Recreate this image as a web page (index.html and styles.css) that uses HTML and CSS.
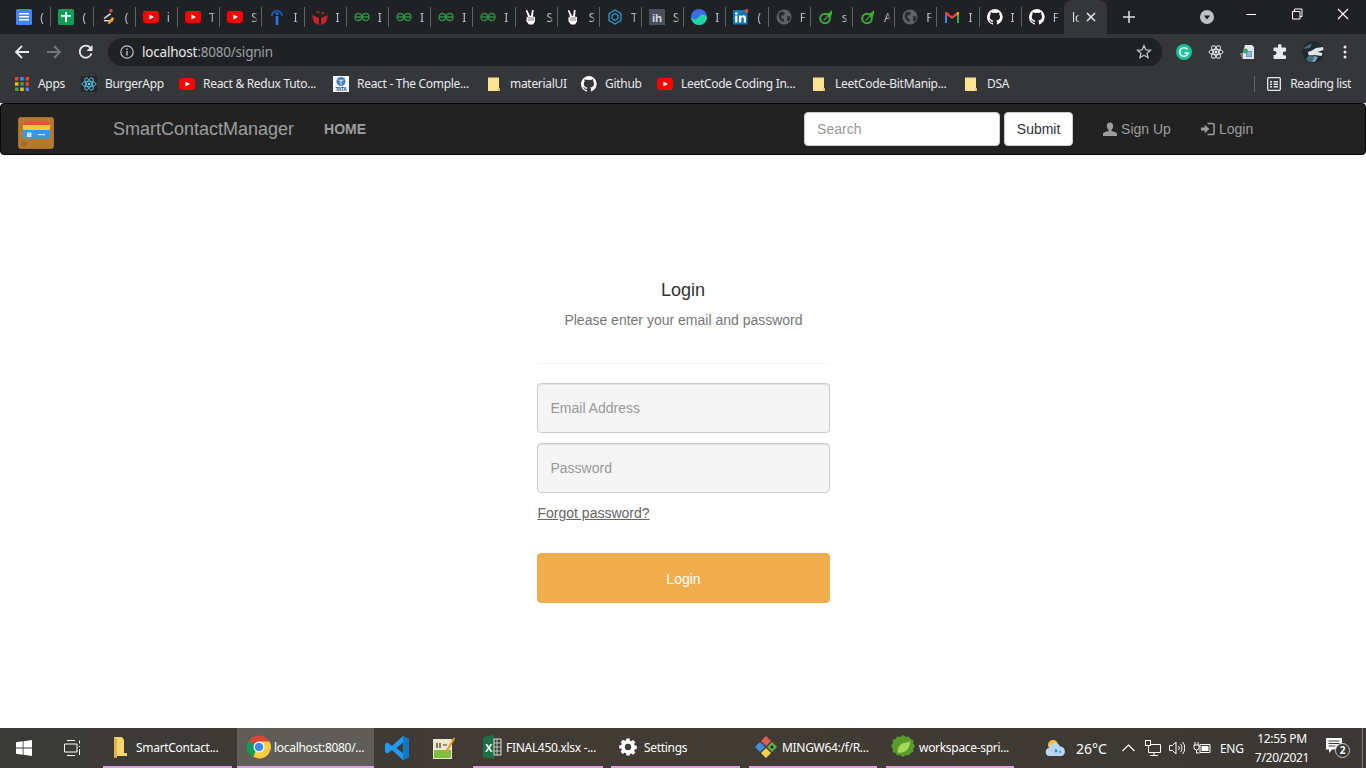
FILE: index.html
```html
<!DOCTYPE html>
<html lang="en">
<head>
<meta charset="utf-8">
<title>Login</title>
<link rel="stylesheet" href="styles.css">
</head>
<body>
<svg class="defs" aria-hidden="true">
  <symbol id="docs" viewBox="0 0 16 16"><rect width="16" height="16" rx="1.5" fill="#4285f4"/><path d="M3 4h10v1.600H3zM3 7h10v1.600H3zM3 10h10v1.600H3z" fill="#fff"/></symbol>
  <symbol id="sheets" viewBox="0 0 16 16"><rect width="16" height="16" rx="1.5" fill="#0f9d58"/><path d="M3 6h10v1.800H3zM7 3h2v10H7z" fill="#fff"/></symbol>
  <symbol id="pen" viewBox="0 0 16 16"><circle cx="10" cy="1.800" r="1.700" fill="#e2533b"/><path d="M9 4 2.500 9l1 1L10 5.500z" fill="#d9d9d9"/><path d="M3 11h9v1.400H3z" fill="#ddd"/><path d="M11 8l2.500 1.500-5 5.500-2-.6z" fill="#f2a428"/></symbol>
  <symbol id="yt" viewBox="0 0 16 16"><rect y="2" width="16" height="12" rx="3" fill="#f00"/><path d="M6.400 5.400 11 8l-4.600 2.600z" fill="#fff"/></symbol>
  <symbol id="info-i" viewBox="0 0 16 16"><path d="M2 7a6 6 0 0 1 12 0h-1.600a4.400 4.400 0 0 0-8.800 0z" fill="#1a5fd0"/><circle cx="8" cy="4.600" r="1.700" fill="#1a5fd0"/><rect x="6.700" y="7" width="2.600" height="9" rx=".5" fill="#2b78ea"/></symbol>
  <symbol id="redbox" viewBox="0 0 16 16"><path d="M8 0l8 3v5l-8 3-8-3V3z" fill="#222"/><path d="M0 6l7 3v7l-5-2.500zM16 6l-7 3v7l5-2.500z" fill="#c9242c"/><path d="M4 3l2-1 2 1-2 1zM9 4l2-1 2 1-2 1z" fill="#c9242c"/></symbol>
  <symbol id="gfg" viewBox="0 0 16 16"><path d="M.5 8h15M8 8c-.6-2.600-2.200-3.500-3.800-3.500S1 5.800 1 8s1.500 3.500 3.200 3.500S7.400 10.600 8 8c.6 2.600 2.200 3.500 3.800 3.500S15 10.200 15 8s-1.500-3.500-3.200-3.500S8.600 5.400 8 8z" fill="none" stroke="#2f8d46" stroke-width="1.300"/></symbol>
  <symbol id="peace" viewBox="0 0 16 16"><path d="M4.200 1 7 7l1-.2L9 1h1.600L10 7.500l2 .5v4.500L10 15.500H6L3.500 12.500V8.500L5 7.500 2.800 1.600z" fill="#fff"/><path d="M5 9h6M5 11h6" stroke="#555" stroke-width=".8"/></symbol>
  <symbol id="hex" viewBox="0 0 16 16"><path d="M8 1l6 3.500v7L8 15l-6-3.500v-7z" fill="none" stroke="#2a9fd8" stroke-width="1.300"/><path d="M8 4.500l3 1.800v3.400l-3 1.800-3-1.800V6.300z" fill="none" stroke="#2a9fd8" stroke-width="1.200"/></symbol>
  <symbol id="ih" viewBox="0 0 16 16"><rect width="16" height="16" fill="#4a4f5e"/><text x="8" y="12.500" font-family="Liberation Sans" font-size="11.500" font-weight="700" fill="#d6d8dc" text-anchor="middle">ih</text></symbol>
  <symbol id="wave" viewBox="0 0 16 16"><circle cx="8" cy="8" r="8" fill="#3f6bea"/><path d="M0 8c2 3 4 3 6 1.500S10 5 12 5.500 15 7 16 8a8 8 0 0 1-16 0z" fill="#1fd6a3"/></symbol>
  <symbol id="li" viewBox="0 0 16 16"><rect y="1" width="14.500" height="14.500" rx="1" fill="#0a78b5"/><path d="M2.200 6.500h2.200v7H2.200zM2.100 3.600h2.400v2H2.100zM6 6.500h2.100v1c.5-.8 1.300-1.200 2.300-1.200 1.900 0 2.600 1.200 2.600 3.100v4.100h-2.200V9.800c0-.9-.3-1.500-1.100-1.500-.9 0-1.400.6-1.400 1.600v3.600H6z" fill="#fff"/><circle cx="13.500" cy="2" r="2" fill="#e8453c"/></symbol>
  <symbol id="globe" viewBox="0 0 16 16"><circle cx="8" cy="8" r="7.500" fill="#5f6368"/><path d="M3 4l3-1.500 3 1-1 2.500-3 1 1 2.500 2 .5-.5 3L5 12 2.500 8zM11 7.500l3-.5.5 3-2.500 3-1-2z" fill="#2c2d30"/></symbol>
  <symbol id="leaf" viewBox="0 0 16 16"><circle cx="7" cy="9.500" r="4.800" fill="none" stroke="#3fa93a" stroke-width="2"/><path d="M6 5.200C9 4.500 12 4 14 1c.4 3-.4 6-2.200 8.500L10 6.500z" fill="#3fa93a"/><path d="M5.500 11.500 10 6.800" stroke="#3fa93a" stroke-width="1.200"/></symbol>
  <symbol id="gmail" viewBox="0 0 16 16"><path d="M1 3.500 3 3v11H1z" fill="#4285f4"/><path d="M13 3l2 .5V14h-2z" fill="#34a853"/><path d="M1 3.500 3 3l5 4.200L13 3l2 .5V5L8 10 1 5z" fill="#ea4335"/><path d="M13 3l2 .5V5l-2 1.500z" fill="#fbbc04"/></symbol>
  <symbol id="github" viewBox="0 0 16 16"><path fill="#fff" d="M8 0a8 8 0 0 0-2.500 15.600c.4.100.5-.2.500-.4v-1.400c-2.200.5-2.700-1-2.700-1-.4-.9-.9-1.200-.9-1.200-.7-.5.100-.5.100-.5.800.1 1.200.8 1.200.8.700 1.200 1.900.9 2.300.7.100-.5.300-.9.500-1.100-1.800-.2-3.700-.9-3.700-4 0-.9.300-1.600.8-2.100-.1-.2-.4-1 .1-2.100 0 0 .7-.2 2.200.8a7.600 7.600 0 0 1 4 0c1.500-1 2.200-.8 2.200-.8.400 1.100.2 1.900.1 2.100.5.600.8 1.300.8 2.100 0 3.100-1.900 3.700-3.700 3.900.3.300.6.800.6 1.500v2.200c0 .2.100.5.500.4A8 8 0 0 0 8 0z"/></symbol>
  <symbol id="folder" viewBox="0 0 16 16"><path d="M2 1.500h11v11l1 .4V15H2z" fill="#fde293"/><path d="M12.500 12h1.500v3h-2z" fill="#e3b94e"/></symbol>
  <symbol id="react" viewBox="0 0 16 16"><rect width="16" height="16" fill="#23272b" rx="1"/><g fill="none" stroke="#61dafb" stroke-width=".8"><ellipse cx="8" cy="8" rx="7" ry="2.700"/><ellipse cx="8" cy="8" rx="7" ry="2.700" transform="rotate(60 8 8)"/><ellipse cx="8" cy="8" rx="7" ry="2.700" transform="rotate(120 8 8)"/></g><circle cx="8" cy="8" r="1.300" fill="#61dafb"/></symbol>
  <symbol id="tata" viewBox="0 0 16 16"><rect width="16" height="16" fill="#f4f6f8"/><circle cx="8" cy="5.500" r="4.500" fill="#3f7cc0"/><path d="M5 3.500c1.500 2 4.500 2 6 0M8 3v6" stroke="#fff" stroke-width=".8" fill="none"/><text x="8" y="15.300" font-family="Liberation Sans" font-size="5" font-weight="700" fill="#1a4f8f" text-anchor="middle">TATA</text></symbol>
</svg>

<header class="tabstrip">
  <div class="tab"><svg class="fav"><use href="#docs"/></svg><span class="tab-t">(</span></div>
  <div class="tab"><svg class="fav"><use href="#sheets"/></svg><span class="tab-t">(</span></div>
  <div class="tab"><svg class="fav"><use href="#pen"/></svg><span class="tab-t">(</span></div>
  <div class="tab"><svg class="fav"><use href="#yt"/></svg><span class="tab-t">i</span></div>
  <div class="tab"><svg class="fav"><use href="#yt"/></svg><span class="tab-t">T</span></div>
  <div class="tab"><svg class="fav"><use href="#yt"/></svg><span class="tab-t">S</span></div>
  <div class="tab"><svg class="fav"><use href="#info-i"/></svg><span class="tab-t">I</span></div>
  <div class="tab"><svg class="fav"><use href="#redbox"/></svg><span class="tab-t">I</span></div>
  <div class="tab"><svg class="fav"><use href="#gfg"/></svg><span class="tab-t">I</span></div>
  <div class="tab"><svg class="fav"><use href="#gfg"/></svg><span class="tab-t">I</span></div>
  <div class="tab"><svg class="fav"><use href="#gfg"/></svg><span class="tab-t">I</span></div>
  <div class="tab"><svg class="fav"><use href="#gfg"/></svg><span class="tab-t">I</span></div>
  <div class="tab"><svg class="fav"><use href="#peace"/></svg><span class="tab-t">S</span></div>
  <div class="tab"><svg class="fav"><use href="#peace"/></svg><span class="tab-t">S</span></div>
  <div class="tab"><svg class="fav"><use href="#hex"/></svg><span class="tab-t">T</span></div>
  <div class="tab"><svg class="fav"><use href="#ih"/></svg><span class="tab-t">S</span></div>
  <div class="tab"><svg class="fav"><use href="#wave"/></svg><span class="tab-t">I</span></div>
  <div class="tab"><svg class="fav"><use href="#li"/></svg><span class="tab-t">(</span></div>
  <div class="tab"><svg class="fav"><use href="#globe"/></svg><span class="tab-t">F</span></div>
  <div class="tab"><svg class="fav"><use href="#leaf"/></svg><span class="tab-t">s</span></div>
  <div class="tab"><svg class="fav"><use href="#leaf"/></svg><span class="tab-t">A</span></div>
  <div class="tab"><svg class="fav"><use href="#globe"/></svg><span class="tab-t">F</span></div>
  <div class="tab"><svg class="fav"><use href="#gmail"/></svg><span class="tab-t">I</span></div>
  <div class="tab"><svg class="fav"><use href="#github"/></svg><span class="tab-t">I</span></div>
  <div class="tab tab-last"><svg class="fav"><use href="#github"/></svg><span class="tab-t">F</span></div>
  <div class="tab-active"><span class="tab-active-t">lo</span>
    <svg class="tab-x" viewBox="0 0 10 10"><path d="M1 1l8 8M9 1L1 9" stroke="#e8eaed" stroke-width="1.500"/></svg>
  </div>
  <svg class="newtab" viewBox="0 0 12 12"><path d="M6 0v12M0 6h12" stroke="#dfe1e5" stroke-width="1.500"/></svg>
  <svg class="profile-drop" viewBox="0 0 14 14"><circle cx="7" cy="7" r="7" fill="#bdc1c6"/><path d="M3.800 5.500h6.400L7 9.500z" fill="#202124"/></svg>
  <div class="winctl">
    <svg class="win-btn" viewBox="0 0 46 28"><path d="M18 14.500h10" stroke="#fff"/></svg>
    <svg class="win-btn" viewBox="0 0 46 28"><path d="M18.500 11.500h7.500v7.500h-7.500zM20.500 11.500v-2.500h7.500v7.500h-2" fill="none" stroke="#fff"/></svg>
    <svg class="win-btn" viewBox="0 0 46 28"><path d="M18 9l10 10M28 9L18 19" stroke="#fff" stroke-width="1.100"/></svg>
  </div>
</header>

<nav class="toolbar">
  <svg class="tool-ic ic-back" viewBox="0 0 16 16"><path d="M15 8H2M8 2 2 8l6 6" fill="none" stroke="#e8eaed" stroke-width="1.800"/></svg>
  <svg class="tool-ic ic-fwd" viewBox="0 0 16 16"><path d="M1 8h13M8 2l6 6-6 6" fill="none" stroke="#74777b" stroke-width="1.800"/></svg>
  <svg class="tool-ic ic-reload" viewBox="0 0 16 16"><path d="M13.500 9.500A6 6 0 1 1 12.300 3.700" fill="none" stroke="#e8eaed" stroke-width="1.800"/><path d="M14.500 1v6h-6z" fill="#e8eaed"/></svg>
  <div class="omnibox">
    <svg class="omni-info" viewBox="0 0 14 14"><circle cx="7" cy="7" r="6.200" fill="none" stroke="#bdc1c6" stroke-width="1.200"/><path d="M6.300 6h1.400v4.500H6.300zM6.300 3.500h1.400v1.400H6.300z" fill="#bdc1c6"/></svg>
    <span class="url"><span class="url-host">localhost</span>:8080/signin</span>
    <svg class="omni-star" viewBox="0 0 16 16"><path d="M8 1.500l1.900 4.300 4.600.4-3.500 3 1.100 4.500L8 11.300l-4.100 2.400L5 9.200l-3.500-3 4.600-.4z" fill="none" stroke="#bdc1c6" stroke-width="1.300"/></svg>
  </div>
  <div class="exts">
    <svg class="ext" viewBox="0 0 16 16"><circle cx="8" cy="8" r="8" fill="#15c39a"/><path d="M11.500 5.500A4.300 4.300 0 1 0 12.200 9H8.500" fill="none" stroke="#fff" stroke-width="1.500"/></svg>
    <svg class="ext" viewBox="0 0 16 16"><g fill="none" stroke="#e8eaed" stroke-width="1"><ellipse cx="8" cy="8" rx="7" ry="2.700"/><ellipse cx="8" cy="8" rx="7" ry="2.700" transform="rotate(60 8 8)"/><ellipse cx="8" cy="8" rx="7" ry="2.700" transform="rotate(120 8 8)"/></g><circle cx="8" cy="8" r="1.400" fill="#e8eaed"/></svg>
    <svg class="ext" viewBox="0 0 16 16"><path d="M5 1h7l2 2v12H3V8z" fill="#dfe8f2"/><path d="M6 7h6v6H6z" fill="#4a7fb5"/><path d="M8 7v6M10 7v6M6 9h6M6 11h6" stroke="#dfe8f2" stroke-width=".6"/><circle cx="5.500" cy="7" r="2.500" fill="#39a86b"/><path d="M0 10h3M1 12h2M2 14h1" stroke="#ccc"/></svg>
    <svg class="ext" viewBox="0 0 16 16"><path d="M6 1.500a1.800 1.800 0 0 1 3.500 0V3.500H13a1 1 0 0 1 1 1V7.500h-1.300a2 2 0 0 0 0 4H14v2.500a1 1 0 0 1-1 1H2.500a1 1 0 0 1-1-1v-3h1a2 2 0 0 0 0-4h-1V4.500a1 1 0 0 1 1-1H6z" fill="#e8eaed"/></svg>
    <svg class="ext-avatar" viewBox="0 0 22 22"><circle cx="11" cy="11" r="11" fill="#1e2a30"/><path d="M1 8c3-3 6-5 9-5l-2 4zM4 18l5-6 3 1-2 8H7z" fill="#4b6a7d"/><path d="M6 11c3-1 5-2 8-4l7-1 .5 3-6 2 5 1-1 3-7-1-6 0z" fill="#dfe6ea"/><path d="M12 15l4 1-3 5h-3z" fill="#7fa0b4"/></svg>
    <svg class="ext-menu" viewBox="0 0 4 14"><circle cx="2" cy="2" r="1.500" fill="#e8eaed"/><circle cx="2" cy="7" r="1.500" fill="#e8eaed"/><circle cx="2" cy="12" r="1.500" fill="#e8eaed"/></svg>
  </div>
</nav>

<div class="bookmarks">
  <a class="bm bm-apps"><svg class="apps-ic" viewBox="0 0 14 14"><path fill="#ea4335" d="M0 0h3.500v3.500H0z"/><path fill="#4285f4" d="M5.200 0h3.500v3.500H5.200z"/><path fill="#ea4335" d="M10.500 0H14v3.500h-3.500z"/><path fill="#fbbc04" d="M0 5.200h3.500v3.500H0z"/><path fill="#34a853" d="M5.200 5.200h3.500v3.500H5.200z"/><path fill="#ea4335" d="M10.500 5.200H14v3.500h-3.500z"/><path fill="#34a853" d="M0 10.500h3.500V14H0z"/><path fill="#fbbc04" d="M5.200 10.500h3.500V14H5.200z"/><path fill="#4285f4" d="M10.500 10.500H14V14h-3.500z"/></svg><span>Apps</span></a>
  <a class="bm"><svg class="fav"><use href="#react"/></svg><span>BurgerApp</span></a>
  <a class="bm"><svg class="fav"><use href="#yt"/></svg><span>React &amp; Redux Tuto...</span></a>
  <a class="bm"><svg class="fav"><use href="#tata"/></svg><span>React - The Comple...</span></a>
  <a class="bm"><svg class="fav"><use href="#folder"/></svg><span>materialUI</span></a>
  <a class="bm"><svg class="fav"><use href="#github"/></svg><span>Github</span></a>
  <a class="bm"><svg class="fav"><use href="#yt"/></svg><span>LeetCode Coding In...</span></a>
  <a class="bm"><svg class="fav"><use href="#folder"/></svg><span>LeetCode-BitManip...</span></a>
  <a class="bm"><svg class="fav"><use href="#folder"/></svg><span>DSA</span></a>
  <a class="bm bm-read"><svg class="read-ic" viewBox="0 0 14 14"><rect x=".7" y=".7" width="12.600" height="12.600" rx="1" fill="none" stroke="#e8eaed" stroke-width="1.300"/><path d="M3 4h2v1.400H3zM6.500 4H11v1.400H6.500zM3 6.500h2v1.400H3zM6.500 6.500H11v1.400H6.500zM3 9h2v1.400H3zM6.500 9H11v1.400H6.500z" fill="#e8eaed"/></svg><span class="read-t">Reading list</span></a>
</div>

<div class="navbar">
  <svg class="logo" viewBox="0 0 36 32"><rect x=".5" y=".5" width="35" height="31" rx="2" fill="#b5782c" stroke="#a66e26"/><path d="M5 7c1-2 3-3 5-3h18c2 0 3 1 3 2l1 2H5z" fill="#ef4f3f"/><path d="M5 8h27v5H5z" fill="#f9c53d"/><path d="M5 13h27v7a1.500 1.500 0 0 1-1.500 1.500h-24A1.500 1.500 0 0 1 5 20z" fill="#2b9bf4"/><rect x="9" y="15.500" width="4.500" height="4.500" fill="#cfe8ff"/><rect x="20" y="17" width="7" height="1.200" fill="#cfe8ff"/><circle cx="6" cy="26.500" r="2.500" fill="#a56b22"/></svg>
  <a class="brand">SmartContactManager</a>
  <a class="nav-home">HOME</a>
  <form class="nav-search">
    <input class="nav-input" type="text" placeholder="Search">
    <button class="nav-submit" type="button">Submit</button>
  </form>
  <a class="nav-link nav-signup"><svg class="glyph" viewBox="0 0 14 14"><path d="M7 .5c2 0 3.200 1.400 3.200 3.500 0 1.500-.7 3-1.700 3.700v1.300c2.300.5 5 1.300 5.500 2.500V14H0v-2.500C.5 10.300 3.200 9.500 5.500 9V7.700C4.500 7 3.800 5.500 3.800 4 3.800 1.900 5 .5 7 .5z" fill="#9d9d9d"/></svg>Sign Up</a>
  <a class="nav-link"><svg class="glyph" viewBox="0 0 15 14"><path d="M0 5.500h4V2.500L9 7l-5 4.500V8.500H0z" fill="#9d9d9d"/><path d="M7 1h5.500A1.500 1.500 0 0 1 14 2.500v9a1.500 1.500 0 0 1-1.500 1.500H7" fill="none" stroke="#9d9d9d" stroke-width="1.600"/></svg>Login</a>
</div>

<main class="page">
  <section class="login">
    <h1 class="login-title">Login</h1>
    <p class="login-sub">Please enter your email and password</p>
    <hr class="login-rule">
    <input class="field" type="text" placeholder="Email Address">
    <input class="field field-second" type="password" placeholder="Password">
    <a class="forgot">Forgot password?</a>
    <button class="login-btn" type="button">Login</button>
  </section>
</main>

<footer class="taskbar">
  <div class="t-start"><svg class="t-win" viewBox="0 0 16 16"><path d="M0 2.300 6.700 1.300V7.600H0zM7.500 1.200 16 0v7.600H7.500zM0 8.400h6.700v6.300L0 13.700zM7.500 8.400H16V16l-8.500-1.200z" fill="#fff"/></svg></div>
  <div class="t-view"><svg class="t-view-ic" viewBox="0 0 16 16"><path d="M3 .5h8M3 15.500h8M.5 4h12.500v8H.5zM15.500 .5v3M15.500 6v1M15.500 9v6" fill="none" stroke="#fff"/></svg></div>
  <div class="t-item t-w129"><svg class="t-ic" viewBox="0 0 24 24"><path d="M6 2h8l2 3v13h3v3H9l-3 2z" fill="#fbd56e"/><path d="M6 2l3 2v19l-3-1z" fill="#e2b44c"/></svg><span>SmartContact...</span></div>
  <div class="t-item t-active"><svg class="t-ic" viewBox="0 0 24 24"><circle cx="12" cy="12" r="11.500" fill="#db4437"/><path d="M12 12 6 22a11.500 11.500 0 0 1-5-16z" fill="#0f9d58"/><path d="M12 6.500h10.500A11.500 11.500 0 0 1 12 23.500L6.500 22z" fill="#ffcd40"/><circle cx="12" cy="12" r="5.500" fill="#fff"/><circle cx="12" cy="12" r="4.300" fill="#4285f4"/></svg><span>localhost:8080/...</span></div>
  <div class="t-solo"><svg class="t-ic" viewBox="0 0 24 24"><path d="M18 0 24 3v18l-6 3L7 14l-4.500 3.500L0 16V8l2.500-1.500L7 10zM18 6.500 11.500 12l6.500 5.500z" fill="#1f9cf0"/><path d="M18 0 24 3v18l-6 3z" fill="#0e7ac4"/></svg></div>
  <div class="t-solo"><svg class="t-ic" viewBox="0 0 24 24"><rect x="2" y="3" width="19" height="20" fill="#eee9cf"/><path d="M3 14h17v8H3z" fill="#7fbf3f"/><path d="M6 7v5M9 7v5M12 9h4" stroke="#333" stroke-width="1.200"/><path d="M23 1 15 14l-1 3 3-2L24 3z" fill="#e89b2c"/></svg></div>
  <div class="t-item t-w130 t-m7"><svg class="t-ic" viewBox="0 0 24 24"><path d="M5 2 16 0v24L5 22z" fill="#1d7044"/><path d="M16 4h7v16h-7z" fill="none" stroke="#d5e5dc"/><path d="M16 8h7M16 12h7M16 16h7M19 4v16" stroke="#d5e5dc" stroke-width=".8"/><text x="10.500" y="16.500" font-family="Liberation Sans" font-size="11" font-weight="700" fill="#fff" text-anchor="middle">X</text></svg><span>FINAL450.xlsx -...</span></div>
  <div class="t-item t-w129 t-m8"><svg class="t-ic" viewBox="-3 -1.500 30 30"><path fill="#fff" fill-rule="evenodd" d="M10 3h4l.5 2.600 1.700.7 2.200-1.500 2.800 2.800-1.500 2.200.7 1.700 2.600.5v4l-2.600.5-.7 1.700 1.500 2.200-2.800 2.800-2.200-1.500-1.700.7L14 24h-4l-.5-2.600-1.700-.7-2.200 1.500-2.800-2.800 1.500-2.200-.7-1.700L1 15.500v-4l2.600-.5.7-1.700L2.800 7.100l2.800-2.800 2.200 1.500 1.700-.7zM12 9.500a4 4 0 1 0 0 8 4 4 0 0 0 0-8z"/></svg><span>Settings</span></div>
  <div class="t-item t-w128 t-m9"><svg class="t-ic" viewBox="0 0 24 24"><path d="M12 1l5 5-5 5-5-5z" fill="#e05d5d"/><path d="M1 12l5-5 5 5-5 5z" fill="#3f8fe0"/><path d="M12 13l5 5-5 5-5-5z" fill="#f5cf4e"/><path d="M18 7l5 5-5 5-5-5z" fill="#5fae46"/><circle cx="18" cy="12" r="1.500" fill="#222"/></svg><span>MINGW64:/f/R...</span></div>
  <div class="t-item t-w128 t-m9"><svg class="t-ic" viewBox="0 0 24 24"><path d="M12 0l3 2 3-.5 1.500 2.500 3 1-.5 3 2 3-2 3 .5 3-3 1-1.500 2.500-3-.5-3 2-3-2-3 .5-1.500-2.500-3-1 .5-3-2-3 2-3-.5-3 3-1L6 1.500 9 2z" fill="#5b9b2a"/><path d="M19 6c0 8-4 12-12 12-1-4 1-9 6-10 2-.4 4-.8 6-2z" fill="#a6d85a"/></svg><span>workspace-spri...</span></div>
  <div class="tray">
    <svg class="tr-weather" viewBox="0 0 22 18"><circle cx="8" cy="6" r="5" fill="#f6c343"/><path d="M5 17a4 4 0 0 1-.5-8 5.500 5.500 0 0 1 10.500-1.500A5 5 0 0 1 17 17z" fill="#b8d8f2"/><path d="M11 9l-1.500 3a1.500 1.500 0 0 0 3 0zM15 11l-1 2a1 1 0 0 0 2 0z" fill="#3a8de0"/></svg>
    <span class="tr-temp">26°C</span>
    <svg class="tr-chev" viewBox="0 0 13 8"><path d="M.5 7 6.500 1l6 6" fill="none" stroke="#fff" stroke-width="1.100"/></svg>
    <svg class="tr-net" viewBox="0 0 16 16"><path d="M3.500 4.500h12v8h-12zM9 12.500V15M5 15.500h8" fill="none" stroke="#fff"/><rect x=".5" y=".5" width="5" height="5" fill="#3b3834" stroke="#fff"/></svg>
    <svg class="tr-vol" viewBox="0 0 16 16"><path d="M.5 5.500h3l3.500-3.500v12l-3.500-3.500h-3zM9.500 6a3 3 0 0 1 0 4M11.500 4a6 6 0 0 1 0 8M13.500 2a9 9 0 0 1 0 12" fill="none" stroke="#fff"/></svg>
    <svg class="tr-bat" viewBox="0 0 18 12"><path d="M7 2.500h10v8H7z" fill="none" stroke="#fff"/><path d="M8.500 4h7v5h-7z" fill="#fff"/><path d="M2 0v3M5 0v3M1 3h5v2.500a2.500 2.500 0 0 1-5 0zM3.500 8v3h3" fill="none" stroke="#fff"/></svg>
    <span class="tr-eng">ENG</span>
    <div class="tr-clock"><span>12:55 PM</span><span>7/20/2021</span></div>
    <div class="tr-notif"><svg class="tr-notif-ic" viewBox="0 0 16 16"><path d="M0 0h16v11.500H6L3 15v-3.500H0z" fill="#fff"/><path d="M2.500 3h11M2.500 5.500h11M2.500 8h7" stroke="#3b3834"/></svg><span class="tr-badge">2</span></div>
    <div class="tr-desk"></div>
  </div>
</footer>
</body>
</html>
```

FILE: styles.css
```css
* { box-sizing: border-box; }
html, body { margin: 0; padding: 0; height: 768px; overflow: hidden; background: #fff; }
body { display: flex; flex-direction: column; width: 1366px; font-family: "Liberation Sans", Arial, sans-serif; }
.defs { display: none; }
svg { display: block; flex: none; }
.fav { width: 16px; height: 16px; }

/* Tab strip */
.tabstrip { height: 34px; flex: none; background: #202124; display: flex; align-items: stretch; padding-left: 9.300px; font-family: "Noto Sans", sans-serif; }
.tab { width: 42.200px; flex: none; display: flex; align-items: center; padding-left: 7px; position: relative; overflow: hidden; }
.tab::after { content: ""; position: absolute; right: 0; top: 7px; height: 20px; width: 1px; background: #5f6368; }
.tab-last::after { display: none; }
.tab-t { width: 7px; margin-left: 8px; font-size: 12px; color: #b4c0d0; white-space: nowrap; -webkit-mask-image: linear-gradient(90deg, #000 40%, transparent); mask-image: linear-gradient(90deg, #000 40%, transparent); }
.tab-active { width: 43px; flex: none; background: #35363a; border-radius: 8px 8px 0 0; display: flex; align-items: center; padding-left: 8px; }
.tab-active-t { font-size: 12px; color: #dfe3f0; width: 8px; white-space: nowrap; -webkit-mask-image: linear-gradient(90deg, #000 60%, transparent); mask-image: linear-gradient(90deg, #000 60%, transparent); }
.tab-x { width: 10px; height: 10px; margin-left: 6px; }
.newtab { width: 12px; height: 12px; margin: 11px 0 0 16px; }
.profile-drop { width: 14px; height: 14px; margin: 10px 0 0 65px; }
.winctl { display: flex; margin-left: 13.700px; }
.win-btn { width: 46px; height: 28px; }

/* Toolbar */
.toolbar { height: 32px; flex: none; background: #35363a; display: flex; align-items: flex-end; position: relative; }
.tool-ic { width: 16px; height: 16px; margin-bottom: 6px; }
.ic-back { margin-left: 14px; }
.ic-fwd { margin-left: 16px; }
.ic-reload { margin-left: 16px; }
.omnibox { width: 1054px; height: 28px; margin-left: 14px; background: #202124; border-radius: 14px; display: flex; align-items: center; padding-left: 12px; }
.omni-info { width: 14px; height: 14px; }
.url { margin-left: 8px; font-family: "Noto Sans", sans-serif; font-size: 13.500px; letter-spacing: -0.200px; color: #9aa0a6; white-space: nowrap; }
.url-host { color: #e8eaed; }
.omni-star { width: 16px; height: 16px; margin-left: auto; margin-right: 10px; }
.exts { display: flex; align-items: center; height: 28px; margin-left: 14px; }
.ext { width: 16px; height: 16px; margin-right: 16px; }
.ext-avatar { width: 22px; height: 22px; margin-left: -2px; }
.ext-menu { width: 4px; height: 14px; margin-left: 19px; }

/* Bookmarks */
.bookmarks { height: 37px; flex: none; background: #35363a; display: grid; grid-template-columns: 68px 98px 154px 153px 95px 76px 154px 152px 1fr auto; align-items: center; padding: 0 15px 1px 13px; font-family: "Noto Sans", sans-serif; }
.bm { display: flex; align-items: center; gap: 8px; font-size: 12px; letter-spacing: -0.300px; color: #e8eaed; white-space: nowrap; }
.bm span { padding-bottom: 2px; }
.apps-ic { width: 14px; height: 14px; margin-left: 2px; }
.bm-apps { gap: 9px; }
.bm-read { padding-left: 12px; border-left: 1px solid #5f6368; height: 16px; gap: 9px; }
.read-t { letter-spacing: -0.400px; }
.read-ic { width: 14px; height: 14px; }

/* Navbar */
.navbar { height: 52px; flex: none; background: #222; border: 1px solid #080808; border-radius: 4px; display: flex; align-items: center; }
.logo { width: 36px; height: 32px; margin: 8px 0 0 17px; }
.brand { margin-left: 59px; font-size: 18px; color: #9d9d9d; }
.nav-home { margin-left: 30px; font-size: 14px; font-weight: 700; color: #9d9d9d; }
.nav-search { display: flex; gap: 4px; margin-left: 438px; }
.nav-input { width: 196px; height: 34px; padding: 6px 12px; border: 1px solid #ccc; border-radius: 4px; background: #fff; font: 14px "Liberation Sans", sans-serif; }
.nav-input::placeholder { color: #999; opacity: 1; }
.nav-submit { width: 69px; height: 34px; padding: 0; border: 1px solid #ccc; border-radius: 4px; background: #fff; color: #333; font: 14px "Liberation Sans", sans-serif; }
.nav-link { display: flex; align-items: center; gap: 4px; font-size: 14px; color: #9d9d9d; margin-left: 30px; }
.glyph { width: 14px; height: 14px; }

/* Page */
.page { flex: 1; min-height: 0; background: #fff; display: flex; justify-content: center; }
.login { width: 293px; display: flex; flex-direction: column; padding-top: 124px; }
.login-title { margin: 0; font-size: 18px; font-weight: 400; line-height: 22px; color: #333; text-align: center; }
.login-sub { margin: 9px 0 0; padding-left: 1px; font-size: 14px; line-height: 20px; color: #777; text-align: center; }
.login-rule { width: 100%; height: 1px; margin: 33px 0 0; border: 0; background: #f5f5f5; }
.field { height: 50px; margin-top: 19px; padding: 0 13px; background: #f5f5f5; border: 1px solid #ccc; border-radius: 4px; font: 14px "Liberation Sans", sans-serif; color: #555; box-shadow: inset 0 1px 1px rgba(0,0,0,.075); }
.field-second { margin-top: 10px; }
.field::placeholder { color: #999; opacity: 1; }
.forgot { margin: 12px 0 0 1px; align-self: flex-start; font-size: 14px; line-height: 16px; color: #666; text-decoration: underline; }
.login-btn { height: 50px; margin-top: 32px; padding: 2px 0 0 1px; background: #f0ad4e; border: 1px solid #f0ad4e; border-radius: 4px; color: #fff; font: 14px "Liberation Sans", sans-serif; }

/* Taskbar */
.taskbar { height: 40px; flex: none; background: linear-gradient(90deg, #3a3a37, #423b33 45%, #3e3a33 80%, #3a3835); display: flex; align-items: stretch; font-family: "Noto Sans", sans-serif; font-size: 12px; letter-spacing: -0.300px; color: #fff; }
.t-start { width: 48px; flex: none; display: flex; align-items: center; padding-left: 16px; }
.t-win { width: 16px; height: 16px; }
.t-view { width: 55px; flex: none; display: flex; align-items: center; padding-left: 16px; }
.t-view-ic { width: 16px; height: 16px; }
.t-item { flex: none; display: flex; align-items: center; gap: 4px; padding-left: 5px; border-bottom: 2px solid #d9a1e4; white-space: nowrap; }
.t-ic { width: 24px; height: 24px; }
.t-w129 { width: 129px; }
.t-w130 { width: 130px; }
.t-w128 { width: 128px; }
.t-active { width: 137px; margin-left: 5px; padding-left: 10px; background: #5f5d57; gap: 3px; }
.t-solo { width: 46px; flex: none; display: flex; align-items: center; justify-content: center; }
.t-m7 { margin-left: 7px; }
.t-m8 { margin-left: 8px; }
.t-m9 { margin-left: 9px; }
.tray { flex: 1; min-width: 0; display: flex; align-items: center; padding-left: 31px; }
.tr-weather { width: 22px; height: 18px; }
.tr-temp { margin-left: 9px; font-size: 14px; width: 36px; letter-spacing: 0; flex: none; }
.tr-chev { width: 13px; height: 8px; margin-left: 10px; }
.tr-net { width: 16px; height: 16px; margin-left: 10px; }
.tr-vol { width: 16px; height: 16px; margin-left: 8px; }
.tr-bat { width: 18px; height: 12px; margin-left: 8px; }
.tr-eng { margin-left: 9px; width: 24px; flex: none; }
.tr-clock { display: flex; flex-direction: column; align-items: center; flex: none; width: 64px; margin-left: 6px; line-height: 19px; }
.tr-notif { position: relative; flex: none; width: 24px; height: 24px; margin-left: 12px; }
.tr-notif-ic { width: 16px; height: 16px; margin-top: 2px; }
.tr-badge { position: absolute; left: 9px; top: 7px; width: 15px; height: 15px; border: 1px solid #ccc; border-radius: 50%; background: #3b3834; font-size: 10px; font-weight: 700; line-height: 13px; text-align: center; letter-spacing: 0; }
.tr-desk { flex: none; width: 1px; height: 40px; margin-left: 12px; background: #7a7874; }
```
